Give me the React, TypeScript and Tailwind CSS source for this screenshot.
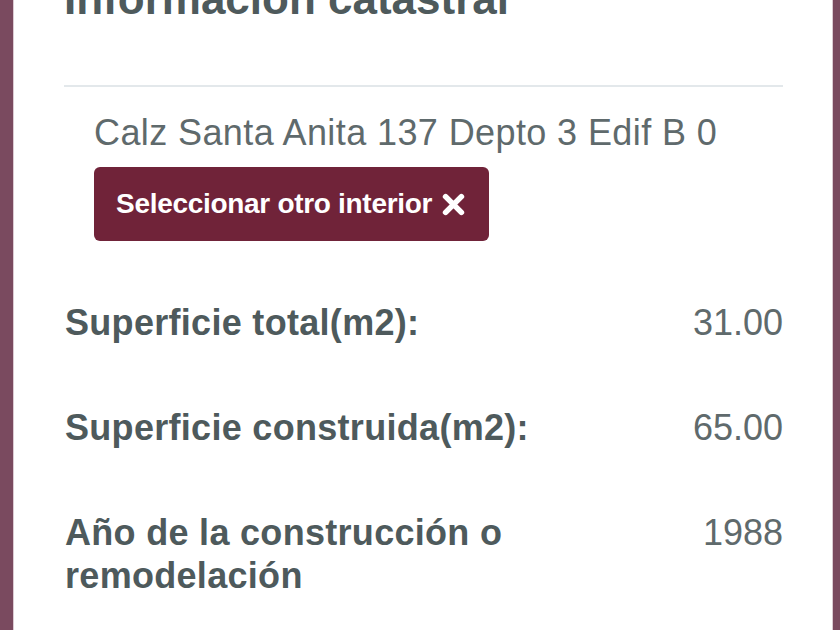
const rows = [
  { label: 'Superficie total(m2):', value: '31.00' },
  { label: 'Superficie construida(m2):', value: '65.00' },
  { label: 'Año de la construcción o remodelación', value: '1988' },
]

function CloseIcon() {
  return (
    <svg width="27" height="27" viewBox="0 0 24 24" className="shrink-0">
      <path d="M5 5 L19 19 M19 5 L5 19" stroke="white" strokeWidth="5" strokeLinecap="round" fill="none" />
    </svg>
  )
}

export default function App() {
  return (
    <div className="flex h-[630px] overflow-hidden bg-[#7a4a5f] pl-[13px] pr-[7px] font-['Liberation_Sans',Arial,sans-serif]">
      <div className="flex-1 border-x border-[#dccbd3] bg-white pl-[50px] pr-[49px]">
        {/* title is scrolled partly out of view */}
        <h2 className="-mt-[25px] text-[44px] font-bold leading-[48px] text-[#4e5a5c]">
          Información catastral
        </h2>

        <div className="mt-[62px] h-[2px] bg-[#e3e8eb]" />

        <div className="mt-[26px] pl-[30px] text-[36px] leading-[40px] tracking-[0.4px] text-[#5f6a6c]">
          Calz Santa Anita 137 Depto 3 Edif B 0
        </div>

        <button
          type="button"
          className="ml-[30px] mt-[14px] flex h-[74px] items-center gap-[8px] rounded-[6px] bg-[#702339] px-[22px] text-[28px] font-bold tracking-[-0.3px] text-white"
        >
          Seleccionar otro interior
          <CloseIcon />
        </button>

        <div className="mt-[60px] flex flex-col gap-[62px]">
          {rows.map((r) => (
            <div key={r.label} className="flex items-start justify-between text-[36px] leading-[43px]">
              <div className="max-w-[470px] pl-[1px] font-bold tracking-[0.3px] text-[#4e5a5c]">{r.label}</div>
              <div className="text-[#5f6a6c]">{r.value}</div>
            </div>
          ))}
        </div>
      </div>
    </div>
  )
}
